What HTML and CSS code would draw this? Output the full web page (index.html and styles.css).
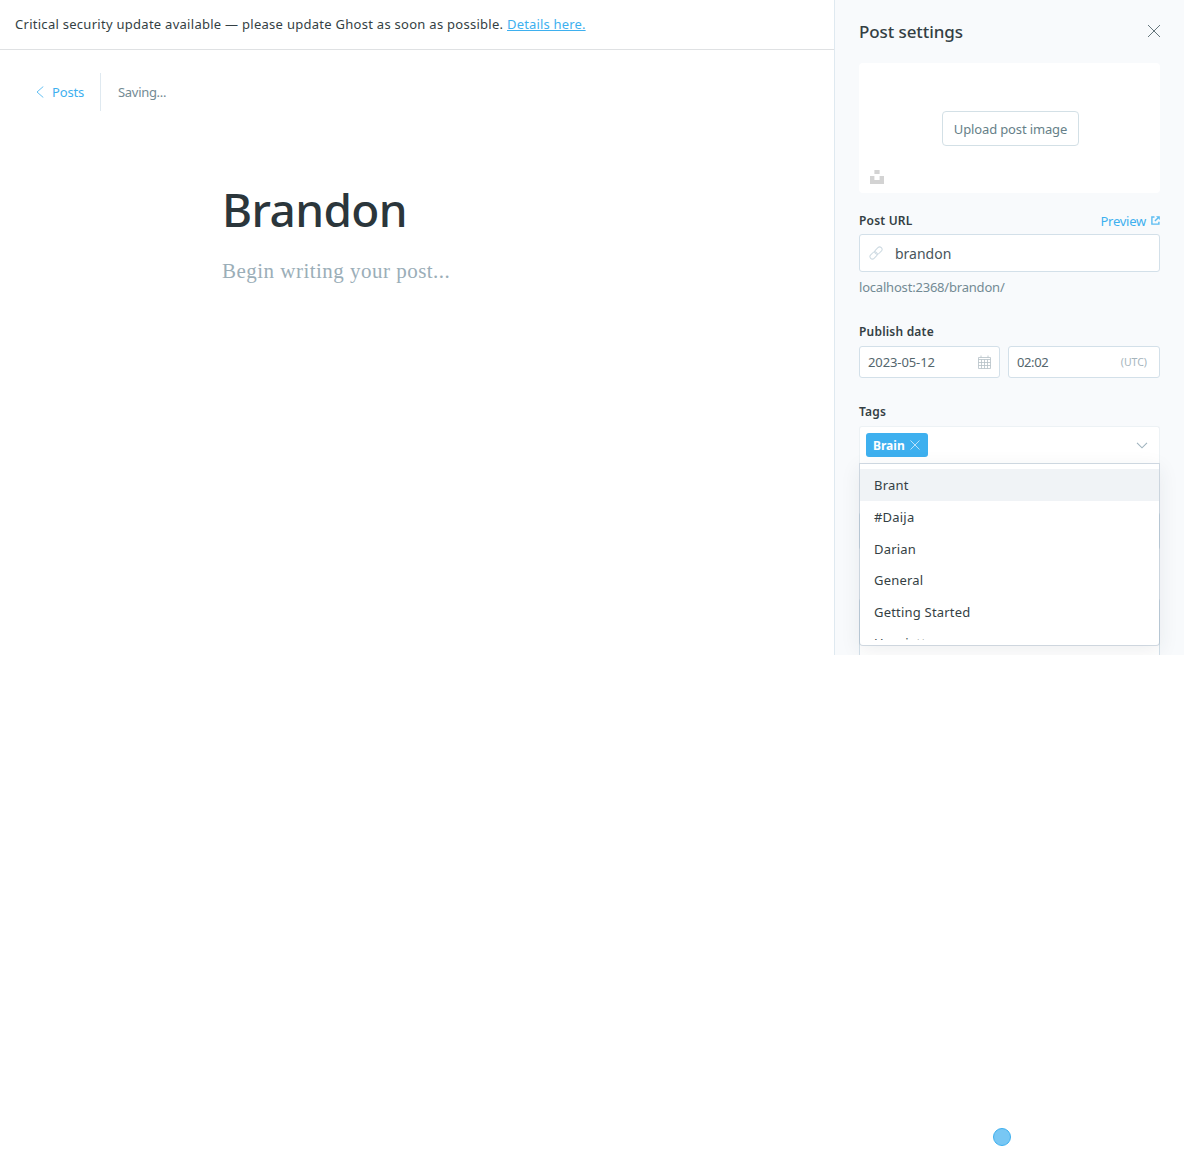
FILE: index.html
```html
<!DOCTYPE html>
<html lang="en">
<head>
<meta charset="utf-8">
<title>Post editor</title>
<link rel="stylesheet" href="styles.css">
</head>
<body>
<div class="app">
  <main class="editor">
    <div class="alert"><span>Critical security update available — please update Ghost as soon as possible.</span> <a class="alert-link" href="#">Details here.</a></div>
    <header class="editor-header">
      <a class="back" href="#">
        <svg width="8" height="12" viewBox="0 0 8 12"><path d="M7.3.5 1 6l6.3 5.5" fill="none" stroke="#3eb0ef" stroke-width=".8"/></svg>
        <span>Posts</span>
      </a>
      <span class="status">Saving...</span>
    </header>
    <article class="post">
      <h1 class="title">Brandon</h1>
      <p class="placeholder">Begin writing your post...</p>
    </article>
  </main>
  <aside class="settings">
    <div class="settings-header">
      <h2 class="settings-title">Post settings</h2>
      <svg class="close" width="14" height="14" viewBox="0 0 14 14"><path d="M1 1l12 12M13 1 1 13" stroke="#54666d" fill="none" stroke-width=".9"/></svg>
    </div>
    <div class="uploader">
      <button class="upload">Upload post image</button>
      <svg class="unsplash" width="14" height="14" viewBox="0 0 14 14"><path d="M4.4 0h5.2v4H4.4zM0 6h4.4v4h5.2V6H14v8H0z" fill="#d3d3d3"/></svg>
    </div>
    <div class="label-row">
      <label class="label">Post URL</label>
      <a class="preview" href="#"><span>Preview</span>
        <svg width="9" height="9" viewBox="0 0 9 9"><path d="M3.5 1H.9v7.1h7V5.7M3.9 5 7 1.9" fill="none" stroke="#5bbcf1" stroke-width="1.4"/><path d="M5 .2h3.8V4z" fill="#5bbcf1"/></svg>
      </a>
    </div>
    <div class="field url">
      <svg width="14" height="14" viewBox="0 0 14 14"><g transform="rotate(-45 7 7)" fill="none" stroke="#ccd9e1" stroke-width="1"><rect x="-.5" y="4.6" width="8.2" height="4.8" rx="2.4"/><rect x="6.3" y="4.6" width="8.2" height="4.8" rx="2.4"/></g></svg>
      <span>brandon</span>
    </div>
    <p class="hint">localhost:2368/brandon/</p>
    <label class="label label-date">Publish date</label>
    <div class="dates">
      <div class="field date"><span>2023-05-12</span>
        <svg width="13" height="14" viewBox="0 0 13 14"><path d="M.5 2.5h12v11H.5zM.5 4.5h12M.5 7.5h12M.5 10.5h12M3.5 4.5v9M6.5 4.5v9M9.5 4.5v9M3 .5v2M10 .5v2" fill="none" stroke="#b5c0c6" stroke-width=".8"/></svg>
      </div>
      <div class="field time"><span>02:02</span><small class="utc">(UTC)</small></div>
    </div>
    <label class="label label-tags">Tags</label>
    <div class="tags">
      <div class="tag"><span>Brain</span>
        <svg width="10" height="10" viewBox="0 0 10 10"><path d="M.5.5l9 9M9.5.5l-9 9" fill="none" stroke="#c8e7fa" stroke-width=".9"/></svg>
      </div>
      <svg class="chevron" width="12" height="7" viewBox="0 0 12 7"><path d="M1 .8l5 5 5-5" fill="none" stroke="#9fb3be" stroke-width="1.1"/></svg>
      <div class="dropdown">
        <ul class="options">
          <li class="option active">Brant</li>
          <li class="option">#Daija</li>
          <li class="option">Darian</li>
          <li class="option">General</li>
          <li class="option">Getting Started</li>
          <li class="option last">Henrietta</li>
        </ul>
      </div>
    </div>
    <div class="select-box"></div>
    <div class="text-box"></div>
  </aside>
</div>
<div class="beacon"></div>
</body>
</html>
```
FILE: styles.css
```css
* { box-sizing: border-box; }
body { margin: 0; min-height: 1162px; position: relative; background: #fff; color: #343f44; font-family: "Noto Sans", "Open Sans", sans-serif; font-size: 13px; }
a { color: #3eb0ef; text-decoration: none; }
h1, h2, p, ul { margin: 0; padding: 0; }
svg { display: block; flex: none; }

.app { display: flex; height: 655px; overflow: hidden; }
.editor { flex: 1; min-width: 0; }
.alert { height: 50px; padding-left: 15px; border-bottom: 1px solid #dfe1e3; line-height: 48px; letter-spacing: .275px; white-space: nowrap; }
.alert-link { letter-spacing: .17px; text-decoration: underline; }
.editor-header { display: flex; align-items: center; height: 38px; margin-top: 23px; padding-left: 36px; }
.back { display: flex; align-items: center; gap: 8px; width: 65px; height: 100%; border-right: 1px solid #dfe9f0; letter-spacing: -.15px; }
.status { margin-left: 17px; color: #738a94; letter-spacing: -.3px; }
.post { padding: 68px 0 0 222px; }
.title { font-size: 46px; font-weight: 500; line-height: 60px; letter-spacing: -.6px; color: #2b363b; }
.placeholder { margin-top: 17px; font: 21px/30px "Liberation Serif", serif; letter-spacing: .48px; color: #9baeb8; }

.settings { width: 350px; padding: 0 24px; border-left: 1px solid #dfe9f0; background: #f8fafc; }
.settings-header { display: flex; align-items: center; justify-content: space-between; height: 63px; }
.settings-title { font-size: 17px; font-weight: 500; letter-spacing: -.09px; }
.close { margin: 0 -1px 2px 0; }
.uploader { position: relative; display: flex; align-items: center; justify-content: center; height: 130px; border-radius: 4px; background: #fff; }
.upload { width: 137px; height: 35px; margin-left: 2px; padding: 2px 0 0; border: 1px solid #d3e0e6; border-radius: 4px; background: #fff; color: #667f88; font: 13px "Noto Sans", sans-serif; letter-spacing: -.14px; }
.unsplash { position: absolute; left: 11px; bottom: 9px; }
.label-row { display: flex; justify-content: space-between; align-items: center; height: 21px; margin-top: 17px; }
.label { display: block; font-size: 12px; font-weight: 600; line-height: 20px; letter-spacing: .2px; }
.preview { display: flex; align-items: center; gap: 5px; letter-spacing: -.25px; }
.field { display: flex; align-items: center; border: 1px solid #d3e0e9; border-radius: 3px; background: #fff; color: #54666d; }
.url { height: 38px; margin-top: 3px; padding-left: 9px; gap: 12px; font-size: 14px; color: #48555b; }
.hint { margin-top: 5px; line-height: 20px; letter-spacing: -.2px; color: #738a94; }
.label-date { margin-top: 25px; }
.dates { display: grid; grid-template-columns: 141px 152px; gap: 8px; margin-top: 4px; }
.date, .time { justify-content: space-between; height: 32px; padding: 0 8px; letter-spacing: -.1px; }
.time { padding-right: 12px; letter-spacing: -.4px; }
.utc { font-size: 10.5px; letter-spacing: 0; color: #a5b4bc; }
.label-tags { margin-top: 24px; }
.tags { position: relative; display: flex; align-items: center; justify-content: space-between; height: 37px; margin-top: 4px; padding: 0 11px 0 6px; border: 1px solid #edf2f5; border-bottom: 0; border-radius: 3px 3px 0 0; background: #fff; }
.tag { display: flex; align-items: center; gap: 5px; width: 62px; height: 24px; padding-left: 7px; border-radius: 3px; background: #3eb0ef; color: #fff; font-size: 12px; font-weight: 700; }
.dropdown { position: absolute; z-index: 1; left: -1px; right: -1px; top: 36px; height: 183px; padding: 5px 0; border: 1px solid rgba(150, 170, 190, .4); border-radius: 0 0 4px 4px; background: #fff; background-clip: padding-box; box-shadow: 0 5px 20px rgba(40, 50, 70, .08); }
.options { height: 171px; overflow: hidden; list-style: none; }
.option { height: 31.8px; padding: 1px 0 0 14px; line-height: 31.8px; letter-spacing: .2px; }
.last { padding-top: 0; line-height: 30.4px; }
.active { background: #f0f3f6; }
.select-box, .text-box { border: 1px solid #d3e0e9; border-radius: 3px; background: #fff; }
.select-box { height: 38px; margin-top: 49px; }
.text-box { height: 108px; margin-top: 48px; }

.beacon { position: absolute; left: 993px; top: 1128px; width: 18px; height: 18px; border: 1px solid #3eb0ef; border-radius: 50%; background: #78c7f4; }
```
